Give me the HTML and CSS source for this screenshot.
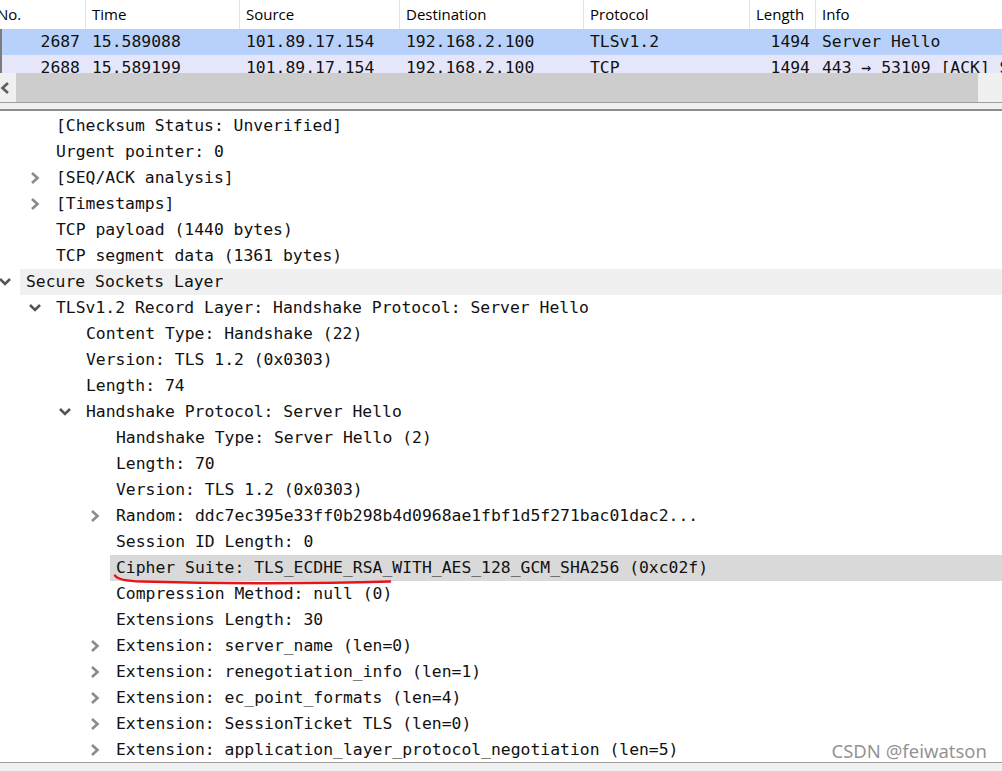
FILE: index.html
```html
<!DOCTYPE html>
<html>
<head>
<meta charset="utf-8">
<link rel="stylesheet" href="styles.css">
</head>
<body>
<div class="app">
  <div class="plist">
    <div class="phead">
      <div class="c c-no"><span class="no-lbl">No.</span></div>
      <div class="c c-time">Time</div>
      <div class="c c-src">Source</div>
      <div class="c c-dst">Destination</div>
      <div class="c c-proto">Protocol</div>
      <div class="c c-len">Length</div>
      <div class="c c-info">Info</div>
    </div>
    <div class="prows">
      <div class="prow sel">
        <div class="c c-no">2687</div>
        <div class="c c-time">15.589088</div>
        <div class="c c-src">101.89.17.154</div>
        <div class="c c-dst">192.168.2.100</div>
        <div class="c c-proto">TLSv1.2</div>
        <div class="c c-len">1494</div>
        <div class="c c-info">Server Hello</div>
      </div>
      <div class="prow alt">
        <div class="c c-no">2688</div>
        <div class="c c-time">15.589199</div>
        <div class="c c-src">101.89.17.154</div>
        <div class="c c-dst">192.168.2.100</div>
        <div class="c c-proto">TCP</div>
        <div class="c c-len">1494</div>
        <div class="c c-info">443 → 53109 [ACK] Seq=1 Ack=518 Win=30336 Len=1440</div>
      </div>
    </div>
    <div class="hscroll">
      <div class="hs-btn"><svg width="10" height="14" viewBox="0 0 10 14"><polyline points="8,2 2.5,7 8,12" fill="none" stroke="#5f5f5f" stroke-width="2.6"/></svg></div>
      <div class="hs-thumb"></div>
      <div class="hs-rest"></div>
    </div>
  </div>
  <div class="splitter"></div>
  <div class="tree">
    <div class="trow l2"><span class="ar"></span><span class="tx">[Checksum Status: Unverified]</span></div>
    <div class="trow l2"><span class="ar"></span><span class="tx">Urgent pointer: 0</span></div>
    <div class="trow l2"><span class="ar"><svg class="rt" width="10" height="14" viewBox="0 0 10 14"><polyline points="2,2 7.5,7 2,12" fill="none" stroke="#8a8a8a" stroke-width="2.6"/></svg></span><span class="tx">[SEQ/ACK analysis]</span></div>
    <div class="trow l2"><span class="ar"><svg class="rt" width="10" height="14" viewBox="0 0 10 14"><polyline points="2,2 7.5,7 2,12" fill="none" stroke="#8a8a8a" stroke-width="2.6"/></svg></span><span class="tx">[Timestamps]</span></div>
    <div class="trow l2"><span class="ar"></span><span class="tx">TCP payload (1440 bytes)</span></div>
    <div class="trow l2"><span class="ar"></span><span class="tx">TCP segment data (1361 bytes)</span></div>
    <div class="trow l1"><span class="ar"><svg class="dn" width="12" height="10" viewBox="0 0 12 10"><polyline points="1,2 6,7 11,2" fill="none" stroke="#555" stroke-width="2.6"/></svg></span><span class="tx hl-light">Secure Sockets Layer</span></div>
    <div class="trow l2"><span class="ar"><svg class="dn" width="12" height="10" viewBox="0 0 12 10"><polyline points="1,2 6,7 11,2" fill="none" stroke="#555" stroke-width="2.6"/></svg></span><span class="tx">TLSv1.2 Record Layer: Handshake Protocol: Server Hello</span></div>
    <div class="trow l3"><span class="ar"></span><span class="tx">Content Type: Handshake (22)</span></div>
    <div class="trow l3"><span class="ar"></span><span class="tx">Version: TLS 1.2 (0x0303)</span></div>
    <div class="trow l3"><span class="ar"></span><span class="tx">Length: 74</span></div>
    <div class="trow l3"><span class="ar"><svg class="dn" width="12" height="10" viewBox="0 0 12 10"><polyline points="1,2 6,7 11,2" fill="none" stroke="#555" stroke-width="2.6"/></svg></span><span class="tx">Handshake Protocol: Server Hello</span></div>
    <div class="trow l4"><span class="ar"></span><span class="tx">Handshake Type: Server Hello (2)</span></div>
    <div class="trow l4"><span class="ar"></span><span class="tx">Length: 70</span></div>
    <div class="trow l4"><span class="ar"></span><span class="tx">Version: TLS 1.2 (0x0303)</span></div>
    <div class="trow l4"><span class="ar"><svg class="rt" width="10" height="14" viewBox="0 0 10 14"><polyline points="2,2 7.5,7 2,12" fill="none" stroke="#8a8a8a" stroke-width="2.6"/></svg></span><span class="tx">Random: ddc7ec395e33ff0b298b4d0968ae1fbf1d5f271bac01dac2...</span></div>
    <div class="trow l4"><span class="ar"></span><span class="tx">Session ID Length: 0</span></div>
    <div class="trow l4"><span class="ar"></span><span class="tx hl-sel">Cipher Suite: TLS_ECDHE_RSA_WITH_AES_128_GCM_SHA256 (0xc02f)</span></div>
    <div class="trow l4"><span class="ar"></span><span class="tx">Compression Method: null (0)</span></div>
    <div class="trow l4"><span class="ar"></span><span class="tx">Extensions Length: 30</span></div>
    <div class="trow l4"><span class="ar"><svg class="rt" width="10" height="14" viewBox="0 0 10 14"><polyline points="2,2 7.5,7 2,12" fill="none" stroke="#8a8a8a" stroke-width="2.6"/></svg></span><span class="tx">Extension: server_name (len=0)</span></div>
    <div class="trow l4"><span class="ar"><svg class="rt" width="10" height="14" viewBox="0 0 10 14"><polyline points="2,2 7.5,7 2,12" fill="none" stroke="#8a8a8a" stroke-width="2.6"/></svg></span><span class="tx">Extension: renegotiation_info (len=1)</span></div>
    <div class="trow l4"><span class="ar"><svg class="rt" width="10" height="14" viewBox="0 0 10 14"><polyline points="2,2 7.5,7 2,12" fill="none" stroke="#8a8a8a" stroke-width="2.6"/></svg></span><span class="tx">Extension: ec_point_formats (len=4)</span></div>
    <div class="trow l4"><span class="ar"><svg class="rt" width="10" height="14" viewBox="0 0 10 14"><polyline points="2,2 7.5,7 2,12" fill="none" stroke="#8a8a8a" stroke-width="2.6"/></svg></span><span class="tx">Extension: SessionTicket TLS (len=0)</span></div>
    <div class="trow l4"><span class="ar"><svg class="rt" width="10" height="14" viewBox="0 0 10 14"><polyline points="2,2 7.5,7 2,12" fill="none" stroke="#8a8a8a" stroke-width="2.6"/></svg></span><span class="tx">Extension: application_layer_protocol_negotiation (len=5)</span></div>
  </div>
  <div class="bottom"></div>
  <svg class="scribble" width="1002" height="771" viewBox="0 0 1002 771"><path d="M115 575.5 C117 579, 124 581, 142 581.5 C 220 583.5, 320 583.5, 390 581.5" fill="none" stroke="#e8121b" stroke-width="2.5" stroke-linecap="round"/></svg>
  <div class="wm">CSDN @feiwatson</div>
</div>
</body>
</html>
```
FILE: styles.css
```css
* { box-sizing: border-box; }
html, body { margin: 0; padding: 0; background: #fff; }
.app {
  position: relative;
  width: 1002px;
  height: 771px;
  overflow: hidden;
  background: #fff;
  font-family: "DejaVu Sans Mono", "Liberation Mono", monospace;
  font-size: 16.4px;
  color: #111;
}
.plist { display: flex; flex-direction: column; }
.phead {
  display: flex;
  height: 29px;
  background: #fff;
  font-family: "Open Sans", "Noto Sans", sans-serif;
  font-size: 15px;
  color: #000;
}
.phead .c {
  border-right: 1px solid #e3e3e3;
  line-height: 28px;
  padding-left: 6px;
}
.phead .c-info { border-right: none; }
.no-lbl { margin-left: -9px; }
.c { flex: none; white-space: nowrap; overflow: hidden; }
.c-no { width: 86px; }
.c-time { width: 154px; }
.c-src { width: 160px; }
.c-dst { width: 184px; }
.c-proto { width: 166px; }
.c-len { width: 66px; }
.c-info { flex: 1; }
.prows { height: 44px; overflow: hidden; }
.prow { display: flex; height: 26px; line-height: 25px; }
.prow .c { padding-left: 6px; }
.prow .c-no { text-align: right; padding-right: 6px; border-left: 2px solid #7c7c7c; }
.prow .c-len { text-align: right; padding-right: 6px; padding-left: 0; }
.prow.sel { background: #b8d1fa; }
.prow.alt { background: #e6e6fa; }
.hscroll { display: flex; height: 29px; background: #f0f0f0; }
.hs-btn { width: 16px; display: flex; align-items: center; justify-content: flex-start; padding-left: 0; }
.hs-thumb { width: 962px; background: #cdcdcd; }
.hs-rest { flex: 1; }
.splitter {
  height: 9px;
  background: #f0f0f0;
  border-top: 1px solid #a0a0a0;
  border-bottom: 2px solid #8c8c8c;
}
.tree { padding-top: 2px; }
.trow { display: flex; height: 26px; line-height: 26px; white-space: nowrap; }
.trow.l1 { padding-left: 0; }
.trow.l2 { padding-left: 30px; }
.trow.l3 { padding-left: 60px; }
.trow.l4 { padding-left: 90px; }
.ar { flex: none; width: 20px; display: flex; align-items: center; }
.ar .rt { margin-left: 0; }
.ar .dn { margin-left: -1px; }
.tx { flex: 1; padding-left: 6px; }
.hl-light { background: #f0f0f0; }
.hl-sel { background: #d9d9d9; }
.bottom {
  position: absolute;
  left: 0; right: 0; bottom: 0;
  height: 9px;
  background: #f0f0f0;
  border-top: 1px solid #a0a0a0;
}
.scribble { position: absolute; left: 0; top: 0; pointer-events: none; }
.wm {
  position: absolute;
  right: 15px;
  top: 739px;
  font-family: "Noto Sans", "Open Sans", sans-serif;
  font-size: 18.5px;
  line-height: 24px;
  color: rgba(110, 110, 110, 0.75);
}
```
